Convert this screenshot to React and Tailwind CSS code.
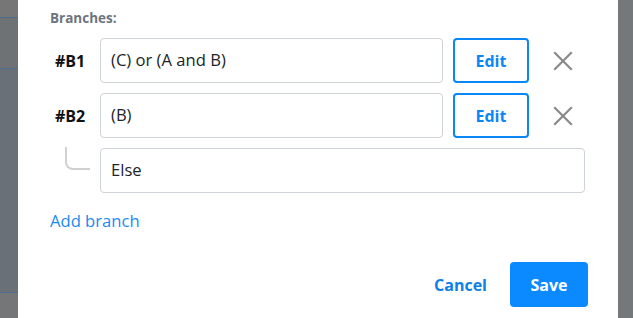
import React from "react";

const font = { fontFamily: '"Open Sans", "Noto Sans", sans-serif' };

function XIcon() {
  return (
    <svg width="20" height="20" viewBox="0 0 20 20" fill="none">
      <path d="M2 2 L18 18 M18 2 L2 18" stroke="#8a8a8a" strokeWidth="2.2" strokeLinecap="square" />
    </svg>
  );
}

function BranchRow({ label, value }) {
  return (
    <div className="flex items-center h-[45px]">
      <div className="w-[50px] pl-[5px] text-[16px] font-bold text-[#111]">{label}</div>
      <div className="w-[343px] h-[45px] border border-[#ced4da] rounded-[4px] flex items-center pl-[10px] text-[16.6px] text-[#212529]">
        {value}
      </div>
      <button className="ml-[10px] w-[76px] h-[45px] border-2 border-[#0a86f7] rounded-[4px] text-[#0a86f7] font-bold text-[16px] flex items-center justify-center">
        Edit
      </button>
      <div className="w-[68px] flex items-center justify-center">
        <XIcon />
      </div>
    </div>
  );
}

export default function App() {
  return (
    <div className="flex w-[633px] h-[318px] overflow-hidden bg-white" style={font}>
      <div className="w-[18px] h-full flex flex-col shrink-0">
        <div className="h-[17px] bg-[#767676]" />
        <div className="h-px bg-[#4f6e8c]" />
        <div className="h-[50px] bg-[#6f7274]" />
        <div className="h-px bg-[#4f6e8c]" />
        <div className="h-[223px] bg-[#6a7077]" />
        <div className="h-px bg-[#4f6e8c]" />
        <div className="flex-1 bg-[#757677]" />
      </div>
      <div className="w-[600px] h-full shrink-0 bg-white pl-[32px] flex flex-col">
        <div className="pt-[8px] text-[13.5px] leading-[20px] font-bold text-[#6c757d]">Branches:</div>
        <div className="mt-[10px] flex flex-col gap-[10px]">
          <BranchRow label="#B1" value="(C) or (A and B)" />
          <BranchRow label="#B2" value="(B)" />
          <div className="flex h-[45px]">
            <div className="w-[50px] shrink-0">
              <div className="ml-[15px] -mt-px w-[25px] h-[23px] border-l-2 border-b-2 border-[#d0d0d0] rounded-bl-[8px]" />
            </div>
            <div className="w-[485px] h-[45px] border border-[#ced4da] rounded-[4px] flex items-center pl-[10px] text-[16.6px] text-[#212529]">
              Else
            </div>
          </div>
        </div>
        <div className="mt-[16px] text-[16.6px] leading-[24px] text-[#1a8cf0]">Add branch</div>
        <div className="mt-[29px] flex items-center justify-end pr-[30px]">
          <button className="mr-[23px] text-[16px] font-bold text-[#0d80e8]">Cancel</button>
          <button className="w-[78px] h-[45px] rounded-[4px] bg-[#0b8aff] text-white font-bold text-[16px]">Save</button>
        </div>
      </div>
      <div className="flex-1 h-full bg-[#75787b]" />
    </div>
  );
}
